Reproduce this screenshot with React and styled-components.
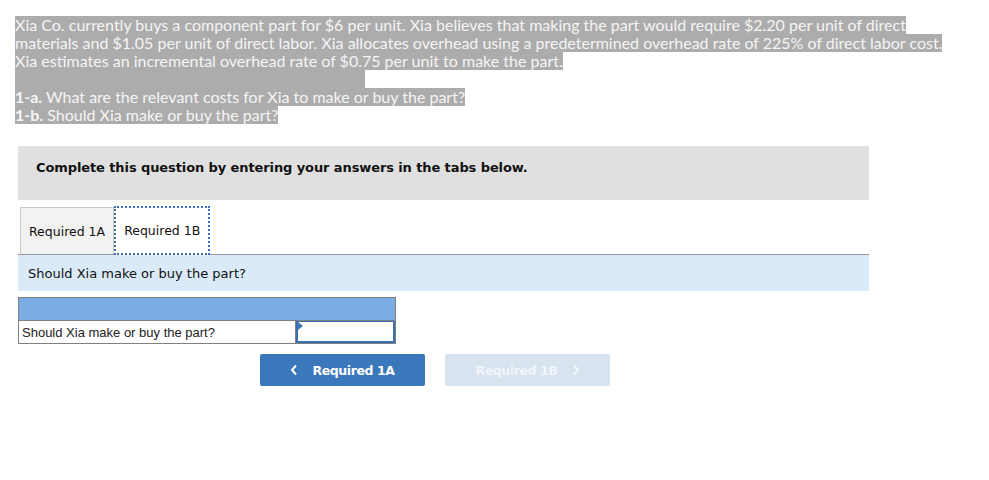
import React from 'react';
import styled, { createGlobalStyle } from 'styled-components';

const GlobalStyle = createGlobalStyle`
  body {
    margin: 0;
    background: #fff;
  }
`;

const App = () => {
    return (
        <Page>
            <GlobalStyle />
            <Intro>
                <Line>Xia Co. currently buys a component part for $6 per unit. Xia believes that making the part would require $2.20 per unit of direct</Line>
                <Line>materials and $1.05 per unit of direct labor. Xia allocates overhead using a predetermined overhead rate of 225% of direct labor cost.</Line>
                <Line>Xia estimates an incremental overhead rate of $0.75 per unit to make the part.</Line>
                <BlankLine />
                <Line><b>1-a.</b> What are the relevant costs for Xia to make or buy the part?</Line>
                <Line><b>1-b.</b> Should Xia make or buy the part?</Line>
            </Intro>

            <Notice>Complete this question by entering your answers in the tabs below.</Notice>

            <Tabs>
                <Tab>Required 1A</Tab>
                <Tab active>Required 1B</Tab>
            </Tabs>
            <Prompt>Should Xia make or buy the part?</Prompt>

            <AnswerTable>
                <HeadRow />
                <Row>
                    <LabelCell>Should Xia make or buy the part?</LabelCell>
                    <InputCell />
                </Row>
            </AnswerTable>

            <Nav>
                <NavButton>
                    <Chevron viewBox="0 0 8 12"><path d="M6 1.5 L2 6 L6 10.5" /></Chevron>
                    Required 1A
                </NavButton>
                <NavButton disabled>
                    Required 1B
                    <Chevron viewBox="0 0 8 12"><path d="M2 1.5 L6 6 L2 10.5" /></Chevron>
                </NavButton>
            </Nav>
        </Page>
    )
}

export default App

const Page = styled.div`
    width: 989px;
    padding: 16px 0 0 0;
`

const Intro = styled.div`
    padding-left: 15px;
    font-family: Lato, "Open Sans", sans-serif;
    font-size: 16px;
    line-height: 18px;
    color: #f4f4f4;
    display: flex;
    flex-direction: column;
    align-items: flex-start;
`

const Line = styled.span`
    background: #acacac;
    white-space: nowrap;
    b {
        font-weight: 700;
    }
`

const BlankLine = styled.span`
    display: block;
    width: 350px;
    height: 18px;
    background: #acacac;
`

const Notice = styled.div`
    margin: 22px 0 0 18px;
    width: 851px;
    height: 54px;
    box-sizing: border-box;
    padding: 14px 18px 0;
    background: #e0e0e0;
    font-family: "DejaVu Sans", Verdana, sans-serif;
    font-weight: 700;
    font-size: 13px;
    color: #111;
    letter-spacing: -0.1px;
`

const Tabs = styled.div`
    display: flex;
    align-items: flex-end;
    margin: 5px 0 0 20px;
    height: 49px;
`

const Tab = styled.div`
    height: ${p => p.active ? '49px' : '47px'};
    box-sizing: border-box;
    padding: 0 8px;
    display: flex;
    align-items: center;
    background: ${p => p.active ? '#fff' : '#f2f2f2'};
    border: ${p => p.active ? '2px dotted #3a6fb0' : '1px solid #c8c8c8'};
    border-bottom: ${p => p.active ? '2px dotted #3a6fb0' : 'none'};
    font-family: "DejaVu Sans", Verdana, sans-serif;
    font-size: 12.5px;
    color: #111;
    margin-bottom: ${p => p.active ? '-1px' : '0'};
`

const Prompt = styled.div`
    margin-left: 18px;
    width: 851px;
    height: 37px;
    box-sizing: border-box;
    border-top: 1px solid #999;
    background: #dbeaf8;
    padding: 0 0 0 10px;
    display: flex;
    align-items: center;
    font-family: "DejaVu Sans", Verdana, sans-serif;
    font-size: 13px;
    color: #111;
`

const AnswerTable = styled.div`
    margin: 6px 0 0 18px;
    width: 378px;
    border: 1px solid #808080;
    box-sizing: border-box;
`

const HeadRow = styled.div`
    height: 22px;
    background: #7aaee3;
    border-bottom: 1px solid #808080;
`

const Row = styled.div`
    display: flex;
    height: 22px;
`

const LabelCell = styled.div`
    box-sizing: border-box;
    width: 277px;
    border-right: 1px solid #808080;
    padding-left: 3px;
    display: flex;
    align-items: center;
    font-family: "Liberation Sans", Arial, sans-serif;
    font-size: 13px;
    color: #222;
`

const InputCell = styled.div`
    flex: 1;
    border: 2px solid #3a6fb0;
    border-top-width: 1px;
    position: relative;
    &::before {
        content: '';
        position: absolute;
        left: 0;
        top: 0;
        border-left: 5px solid #3a77bb;
        border-top: 4px solid transparent;
        border-bottom: 4px solid transparent;
    }
`

const Nav = styled.div`
    display: flex;
    gap: 20px;
    margin: 10px 0 0 260px;
`

const NavButton = styled.div`
    width: 165px;
    height: 32px;
    border-radius: 2px;
    display: flex;
    align-items: center;
    justify-content: center;
    gap: 14px;
    background: ${p => p.disabled ? '#d8e3f0' : '#3a77bb'};
    color: ${p => p.disabled ? '#f2f5fa' : '#fff'};
    font-family: "DejaVu Sans", Verdana, sans-serif;
    font-weight: 700;
    font-size: 12.5px;
    letter-spacing: -0.4px;
`

const Chevron = styled.svg`
    width: 8px;
    height: 12px;
    fill: none;
    stroke: currentColor;
    stroke-width: 2;
`
